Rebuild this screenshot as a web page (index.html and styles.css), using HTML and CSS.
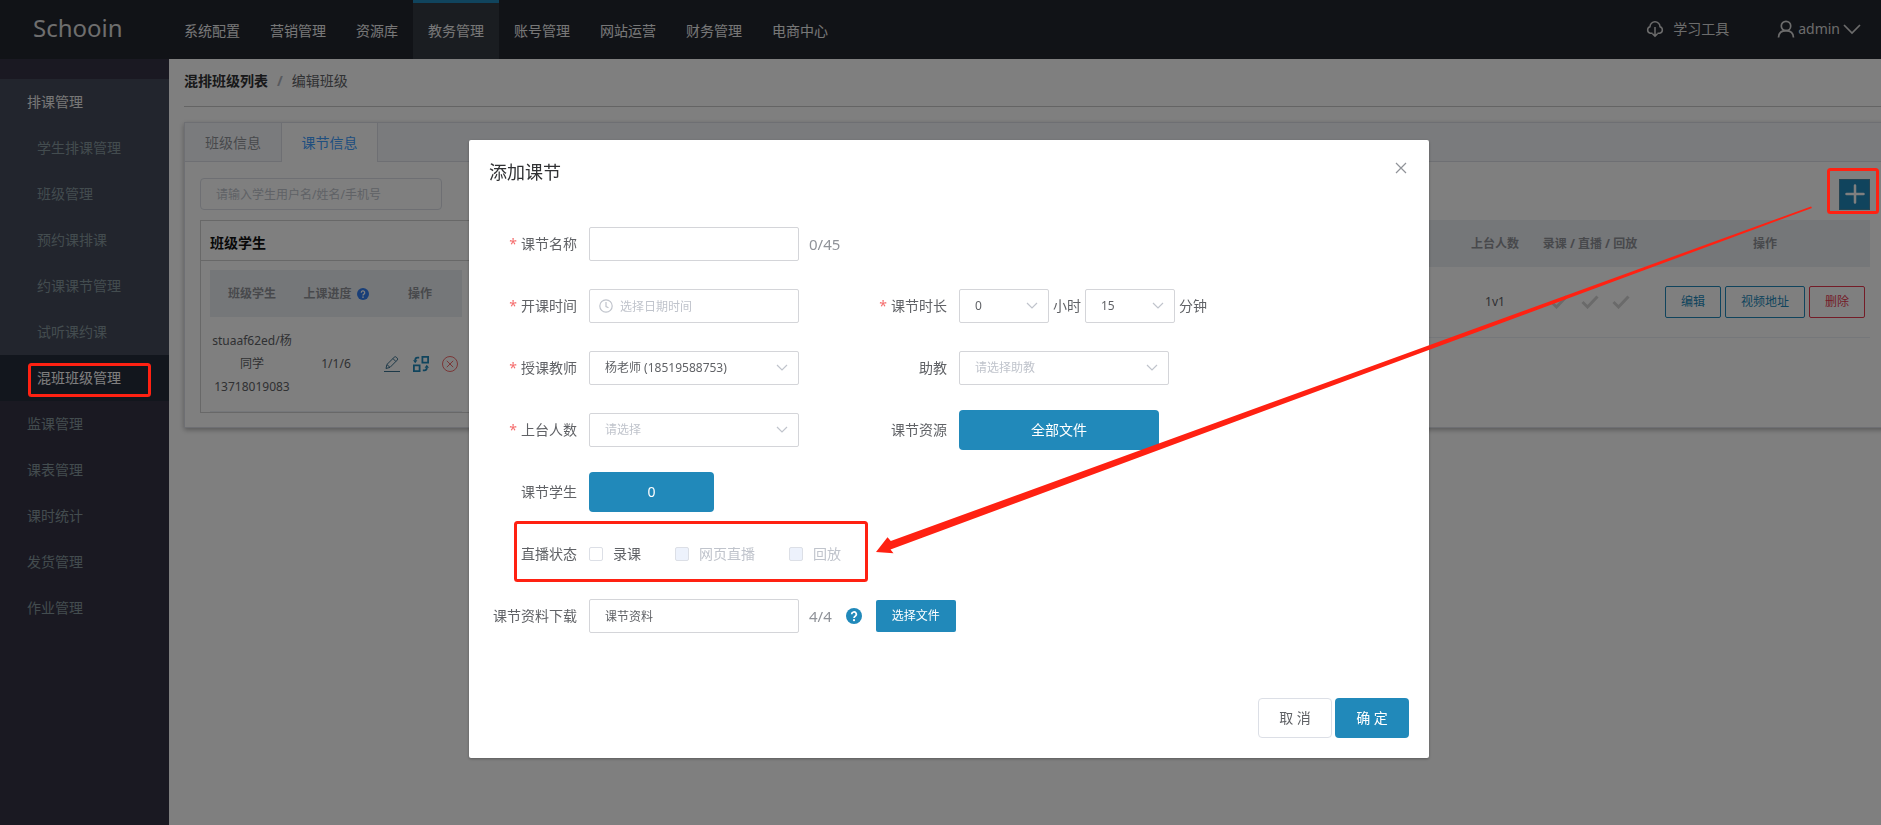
FILE: index.html
```html
<!DOCTYPE html>
<html lang="zh-CN">
<head>
<meta charset="utf-8">
<title>Schooin</title>
<link rel="stylesheet" href="styles.css">
</head>
<body>
<header class="topbar">
  <a class="brand" href="#">Schooin</a>
  <nav class="topnav">
    <a href="#">系统配置</a>
    <a href="#">营销管理</a>
    <a href="#">资源库</a>
    <a class="is-active" href="#">教务管理</a>
    <a href="#">账号管理</a>
    <a href="#">网站运营</a>
    <a href="#">财务管理</a>
    <a href="#">电商中心</a>
  </nav>
  <div class="tools">
    <a class="tool" href="#">
      <svg class="tool-icon" width="18" height="18" viewBox="0 0 18 18" fill="none" stroke="currentColor" stroke-width="1.500"><path d="M6.500 13.200H4.300A3.300 3.300 0 0 1 4 6.800 5 5 0 0 1 14 6.800a3.300 3.300 0 0 1-.3 6.400H11.500M9 7v9M6.500 13.800L9 16.300l2.500-2.500"/></svg>
      <span>学习工具</span>
    </a>
    <a class="user" href="#">
      <svg width="18" height="18" viewBox="0 0 18 18" fill="none" stroke="currentColor" stroke-width="1.700"><circle cx="9" cy="6" r="4.700"/><path d="M1.500 17.500C1.700 13 4.500 10.600 9 10.600s7.300 2.400 7.500 6.900"/></svg>
      <span>admin</span>
      <svg width="18" height="18" viewBox="0 0 18 18" fill="none" stroke="currentColor" stroke-width="1.700"><path d="M1 5l8 8 8-8"/></svg>
    </a>
  </div>
</header>

<div class="layout">
  <aside class="sidebar">
    <div class="menu-group">
      <a class="menu-title" href="#">排课管理</a>
      <a class="menu-child" href="#">学生排课管理</a>
      <a class="menu-child" href="#">班级管理</a>
      <a class="menu-child" href="#">预约课排课</a>
      <a class="menu-child" href="#">约课课节管理</a>
      <a class="menu-child" href="#">试听课约课</a>
      <a class="menu-child is-active" href="#">混班班级管理</a>
    </div>
    <a class="menu-item" href="#">监课管理</a>
    <a class="menu-item" href="#">课表管理</a>
    <a class="menu-item" href="#">课时统计</a>
    <a class="menu-item" href="#">发货管理</a>
    <a class="menu-item" href="#">作业管理</a>
  </aside>

  <main class="content">
    <div class="crumbs">
      <a href="#">混排班级列表</a><span class="slash">/</span><span>编辑班级</span>
    </div>
    <section class="card">
      <div class="tabs">
        <button class="tab" type="button">班级信息</button>
        <button class="tab is-active" type="button">课节信息</button>
      </div>
      <div class="card-body">
        <div class="toolbar">
          <input class="search" type="text" placeholder="请输入学生用户名/姓名/手机号" aria-label="搜索学生">
          <button class="add" type="button" aria-label="添加">
            <svg width="20" height="20" viewBox="0 0 20 20" stroke="currentColor" stroke-width="2.500" stroke-linecap="round"><path d="M10 1.500v17M1.500 10h17"/></svg>
          </button>
        </div>
        <div class="panels">
          <section class="students">
            <h2>班级学生</h2>
            <div class="students-body">
              <table class="grid">
                <colgroup><col class="w84"><col class="w84"><col class="w84"></colgroup>
                <thead>
                  <tr>
                    <th>班级学生</th>
                    <th><span class="with-help">上课进度
                      <svg class="help-blue" width="12" height="12" viewBox="0 0 16 16"><circle cx="8" cy="8" r="8" fill="currentColor"/><path d="M5.700 6.300a2.300 2.300 0 1 1 3.500 1.900C8.300 8.800 8 9 8 10" fill="none" stroke="#fff" stroke-width="1.700"/><circle cx="8" cy="12.200" r="1.100" fill="#fff"/></svg></span></th>
                    <th>操作</th>
                  </tr>
                </thead>
                <tbody>
                  <tr class="student-row">
                    <td>stuaaf62ed/杨<br>同学<br>13718019083</td>
                    <td>1/1/6</td>
                    <td>
                      <div class="row-icons">
                        <button class="icon-btn c-edit" type="button" aria-label="编辑"><svg width="16" height="16" viewBox="0 0 16 16" fill="none" stroke="currentColor"><path d="M2 12.500l.9-4L10.300 1.200a1.400 1.400 0 0 1 2 0l.9.9a1.400 1.400 0 0 1 0 2L6 11.400zM9 2.600l2.800 2.800M2.900 8.500L6 11.400"/><path d="M0 15.500h16"/></svg></button>
                        <button class="icon-btn c-swap" type="button" aria-label="调换"><svg width="16" height="16" viewBox="0 0 16 16" fill="none" stroke="currentColor" stroke-width="1.800"><path d="M9.400.9h5.700v5.700H9.400zM.9 9.400h5.700v5.700H.9z"/><path d="M6.200 1.600H4.400C2.800 1.600 2.200 2.500 2.200 4.500M9.800 14.400h1.800c1.600 0 2.200-.9 2.200-2.900"/><path fill="currentColor" stroke="none" d="M0 4.200h4.400L2.200 7.200zM16 11.800h-4.400l2.200-3z"/></svg></button>
                        <button class="icon-btn c-del" type="button" aria-label="移除"><svg width="16" height="16" viewBox="0 0 16 16" fill="none" stroke="currentColor"><circle cx="8" cy="8" r="7.500"/><path d="M4.800 4.800l6.400 6.400M11.200 4.800l-6.400 6.400"/></svg></button>
                      </div>
                    </td>
                  </tr>
                </tbody>
              </table>
            </div>
          </section>
          <div class="lessons">
            <table class="grid">
              <colgroup><col><col class="w50"><col class="w140"><col class="w210"></colgroup>
              <thead>
                <tr><th></th><th>上台人数</th><th>录课 / 直播 / 回放</th><th>操作</th></tr>
              </thead>
              <tbody>
                <tr class="lesson-row">
                  <td></td>
                  <td>1v1</td>
                  <td>
                    <div class="checks">
                      <svg width="18" height="14" viewBox="0 0 18 14"><path d="M1.500 7l5 5L16.500 1.500"/></svg>
                      <svg width="18" height="14" viewBox="0 0 18 14"><path d="M1.500 7l5 5L16.500 1.500"/></svg>
                      <svg width="18" height="14" viewBox="0 0 18 14"><path d="M1.500 7l5 5L16.500 1.500"/></svg>
                    </div>
                  </td>
                  <td>
                    <div class="row-actions">
                      <button class="outline" type="button">编辑</button>
                      <button class="outline" type="button">视频地址</button>
                      <button class="outline danger" type="button">删除</button>
                    </div>
                  </td>
                </tr>
              </tbody>
            </table>
          </div>
        </div>
      </div>
    </section>
  </main>
</div>

<div class="overlay">
  <form class="dialog" role="dialog" aria-labelledby="dialog-title">
    <div class="dialog-head">
      <h1 id="dialog-title">添加课节</h1>
      <button class="close" type="button" aria-label="关闭"><svg width="12" height="12" viewBox="0 0 12 12" fill="none" stroke="currentColor" stroke-width="1.200"><path d="M1 1l10 10M11 1L1 11"/></svg></button>
    </div>
    <div class="form">
      <div class="row">
        <label class="label required" for="name">课节名称</label>
        <div class="field"><input class="box" id="name" type="text"><span class="count">0/45</span></div>
      </div>
      <div class="row">
        <label class="label required" for="start">开课时间</label>
        <div class="field">
          <span class="wrap">
            <svg class="clock" width="14" height="14" viewBox="0 0 14 14" fill="none" stroke="currentColor" stroke-width="1.200"><circle cx="7" cy="7" r="6.200"/><path d="M7 3v4.500l2.500 1.200"/></svg>
            <input class="box has-icon" id="start" type="text" placeholder="选择日期时间">
          </span>
        </div>
        <label class="label required" for="hours">课节时长</label>
        <div class="field tight">
          <span class="wrap small"><select class="box" id="hours"><option>0</option></select><svg class="caret" width="12" height="8" viewBox="0 0 12 8"><path d="M1 1l5 5 5-5"/></svg></span>
          <label for="hours">小时</label>
          <span class="wrap small"><select class="box" id="minutes"><option>15</option></select><svg class="caret" width="12" height="8" viewBox="0 0 12 8"><path d="M1 1l5 5 5-5"/></svg></span>
          <label for="minutes">分钟</label>
        </div>
      </div>
      <div class="row">
        <label class="label required" for="teacher">授课教师</label>
        <div class="field"><span class="wrap"><select class="box" id="teacher"><option>杨老师 (18519588753)</option></select><svg class="caret" width="12" height="8" viewBox="0 0 12 8"><path d="M1 1l5 5 5-5"/></svg></span></div>
        <label class="label" for="assistant">助教</label>
        <div class="field"><span class="wrap"><select class="box is-empty" id="assistant"><option>请选择助教</option></select><svg class="caret" width="12" height="8" viewBox="0 0 12 8"><path d="M1 1l5 5 5-5"/></svg></span></div>
      </div>
      <div class="row">
        <label class="label required" for="seats">上台人数</label>
        <div class="field"><span class="wrap"><select class="box is-empty" id="seats"><option>请选择</option></select><svg class="caret" width="12" height="8" viewBox="0 0 12 8"><path d="M1 1l5 5 5-5"/></svg></span></div>
        <label class="label" for="files">课节资源</label>
        <div class="field"><button class="primary w200" id="files" type="button">全部文件</button></div>
      </div>
      <div class="row">
        <label class="label" for="pupils">课节学生</label>
        <div class="field"><button class="primary w125" id="pupils" type="button">0</button></div>
      </div>
      <div class="row">
        <span class="label">直播状态</span>
        <div class="field live">
          <label class="check"><input type="checkbox">录课</label>
          <label class="check is-disabled"><input type="checkbox" disabled>网页直播</label>
          <label class="check is-disabled"><input type="checkbox" disabled>回放</label>
        </div>
      </div>
      <div class="row">
        <label class="label" for="material">课节资料下载</label>
        <div class="field wide">
          <input class="box" id="material" type="text" value="课节资料"><span class="count">4/4</span>
          <svg class="help" width="16" height="16" viewBox="0 0 16 16"><circle cx="8" cy="8" r="8" fill="currentColor"/><path d="M5.700 6.300a2.300 2.300 0 1 1 3.500 1.900C8.300 8.800 8 9 8 10" fill="none" stroke="#fff" stroke-width="1.700"/><circle cx="8" cy="12.200" r="1.100" fill="#fff"/></svg>
          <button class="primary pick" type="button">选择文件</button>
        </div>
      </div>
    </div>
    <div class="dialog-foot">
      <button class="plain" type="button">取 消</button>
      <button class="primary" type="submit">确 定</button>
    </div>
  </form>
</div>

<svg class="marks" width="1881" height="825" viewBox="0 0 1881 825">
  <g fill="none" stroke="#ff2112" stroke-width="3">
    <rect x="29.500" y="364.500" width="120" height="31" rx="2"/>
    <rect x="515.500" y="522.500" width="351" height="58" rx="2"/>
    <rect x="1828.500" y="169.500" width="49" height="43" rx="2"/>
  </g>
  <path fill="#ff2112" d="M876 552l11.500-14.700 3.300 3.600L1811 206.500l1 1.400L890.500 549.500l3 3.800z"/>
</svg>
</body>
</html>
```
FILE: styles.css
```css
* { box-sizing: border-box; }
html { overflow: hidden; height: 100%; }
body {
  margin: 0 -17px 0 0;
  min-height: 100%;
  display: flex;
  flex-direction: column;
  background: #fff;
  color: #606266;
  font: 14px/20px "Noto Sans", "Noto Sans CJK SC", sans-serif;
}
a { color: inherit; text-decoration: none; }
button, input, select { font: inherit; color: inherit; margin: 0; }
button { cursor: pointer; padding: 0; }
svg { display: block; flex: none; }
h1, h2 { margin: 0; }

.topbar { display: flex; height: 59px; background: #23262e; color: #fff; }
.brand { width: 169px; padding-left: 33px; font-size: 24px; line-height: 56px; color: #dcdcdc; }
.topnav { display: flex; flex: 1; color: #eee; }
.topnav a { padding: 0 15px; line-height: 56px; border-top: 3px solid transparent; }
.topnav .is-active { background: #343a42; border-top-color: #2189ba; }
.tools { display: flex; gap: 48px; height: 58px; padding-right: 37px; color: #d8d8d8; }
.tool, .user { display: flex; align-items: center; }
.tool { gap: 9px; }
.user { gap: 3px; }

.layout { display: flex; flex: 1; }
.sidebar { width: 169px; padding-top: 20px; background: #343344; color: #87999f; line-height: 46px; }
.sidebar a { display: block; }
.menu-title, .menu-item { padding-left: 27px; }
.menu-child { padding-left: 37px; }
.menu-group { background: #444a5a; }
.menu-title { color: #eee; }
.menu-child.is-active { background: #252c3a; color: #fff; }

.content { flex: 1; min-width: 0; padding: 0 12px 0 15px; }
.crumbs { height: 48px; padding-top: 12px; border-bottom: 1px solid #c8c8c8; margin-right: -12px; }
.crumbs a { font-weight: bold; color: #303133; }
.slash { margin: 0 9px; color: #b0b4bc; font-weight: bold; }

.card { margin-top: 15px; border: 1px solid #dcdfe6; box-shadow: 0 2px 5px rgba(0, 0, 0, .3); }
.tabs { display: flex; height: 39px; background: #f5f7fa; border-bottom: 1px solid #dcdfe6; }
.tab { width: 96px; height: 39px; border: 0; background: none; color: #909399; }
.tab.is-active { width: 97px; background: #fff; color: #409eff; border: solid #dcdfe6; border-width: 0 1px; }
.card-body { padding: 16px 15px 14px; }
.toolbar { display: flex; justify-content: space-between; align-items: center; margin-bottom: 10px; }
.search { width: 242px; height: 32px; padding: 0 15px; border: 1px solid #dcdfe6; border-radius: 4px; background: #fff; font-size: 12px; }
::placeholder { color: #c0c4cc; opacity: 1; }
.add { width: 31px; height: 31px; border: 1px solid #4d88a5; background: #2189ba; color: #fff; display: flex; align-items: center; justify-content: center; }

.panels { display: flex; gap: 10px; align-items: flex-start; }
.students { width: 273px; border: 1px solid #d0d0d0; }
.students h2 { height: 40px; padding: 0 9px; border-bottom: 1px solid #d0d0d0; font-size: 14px; line-height: 44px; color: #111; }
.students-body { padding: 9px 10px 0 9px; }
.lessons { flex: 1; }
.grid { width: 100%; border-collapse: collapse; table-layout: fixed; font-size: 12px; text-align: center; }
.grid th { height: 47px; padding: 0; background: #ebeef2; color: #909399; }
.grid td { padding: 0; border-bottom: 1px solid #ebeef5; }
.w84 { width: 84px; }
.w50 { width: 50px; }
.w140 { width: 140px; }
.w210 { width: 210px; }
.with-help { display: flex; align-items: center; justify-content: center; gap: 5px; }
.help-blue { color: #337ef0; }
.student-row td { height: 94px; line-height: 23px; }
.lesson-row td { height: 70px; }
.row-icons { display: flex; gap: 13px; justify-content: flex-end; padding-right: 4px; }
.icon-btn { border: 0; background: none; }
.c-edit { color: #3b7291; }
.c-swap { color: #2189ba; }
.c-del { color: #f56c6c; }
.checks { display: flex; gap: 13px; justify-content: center; }
.checks path { fill: none; stroke: #d5d5d5; stroke-width: 3; }
.row-actions { display: flex; gap: 4px; justify-content: center; }
.outline { height: 32px; padding: 0 15px; border: 1px solid #2189ba; border-radius: 2px; background: #fff; color: #2189ba; font-size: 12px; }
.danger { border-color: #e8384f; color: #e8384f; }

.overlay { position: fixed; inset: 0 -17px 0 0; display: flex; justify-content: center; align-items: flex-start; padding-top: 140px; background: rgba(0, 0, 0, .5); }
.dialog { width: 960px; padding: 20px; border-radius: 2px; background: #fff; box-shadow: 0 1px 3px rgba(0, 0, 0, .3); }
.dialog-head { display: flex; justify-content: space-between; align-items: flex-start; height: 64px; }
.dialog-head h1 { font-size: 18px; font-weight: normal; line-height: 24px; color: #303133; }
.close { padding: 2px; border: 0; background: none; color: #909399; }
.form { display: grid; gap: 22px; }
.row { display: flex; align-items: center; height: 40px; }
.label { width: 100px; padding-right: 12px; text-align: right; }
.required::before { content: "*"; margin-right: 4px; color: #f56c6c; }
.field { display: flex; align-items: center; width: 270px; }
.field.wide, .field.live, .field.tight { width: auto; }
.tight label { padding: 0 3px 0 4px; }
.tight .small + label { width: 36px; }
.box { display: block; width: 210px; height: 34px; padding: 0 15px; border: 1px solid #d4d5d9; border-radius: 2px; background: #fff; font-size: 12px; appearance: none; outline: 0; }
.wrap { position: relative; }
.wrap.small .box { width: 90px; }
.is-empty { color: #c0c4cc; }
.has-icon { padding-left: 30px; }
.clock { position: absolute; left: 10px; top: 10px; color: #c0c4cc; }
.caret { position: absolute; right: 11px; top: 13px; fill: none; stroke: #c0c4cc; stroke-width: 1.2; pointer-events: none; }
.count { margin-left: 10px; font-size: 15px; color: #909399; }
.primary { height: 40px; padding: 0 20px; border: 0; border-radius: 4px; background: #2189ba; color: #fff; }
.w200 { width: 200px; }
.w125 { width: 125px; }
.pick { width: 80px; height: 32px; padding: 0; border-radius: 2px; font-size: 12px; }
.help { margin: 0 14px; color: #2189ba; }
.check { display: flex; align-items: center; gap: 10px; margin-right: 34px; }
.check input { appearance: none; width: 14px; height: 14px; border: 1px solid #dcdfe6; border-radius: 2px; background: #fff; }
.is-disabled { color: #c0c4cc; }
.check input:disabled { background: #edf2fc; }
.dialog-foot { display: flex; justify-content: flex-end; gap: 3px; margin-top: 62px; }
.dialog-foot button { width: 74px; }
.plain { height: 40px; border: 1px solid #dcdfe6; border-radius: 4px; background: #fff; }
.marks { position: fixed; left: 0; top: 0; pointer-events: none; }
```
